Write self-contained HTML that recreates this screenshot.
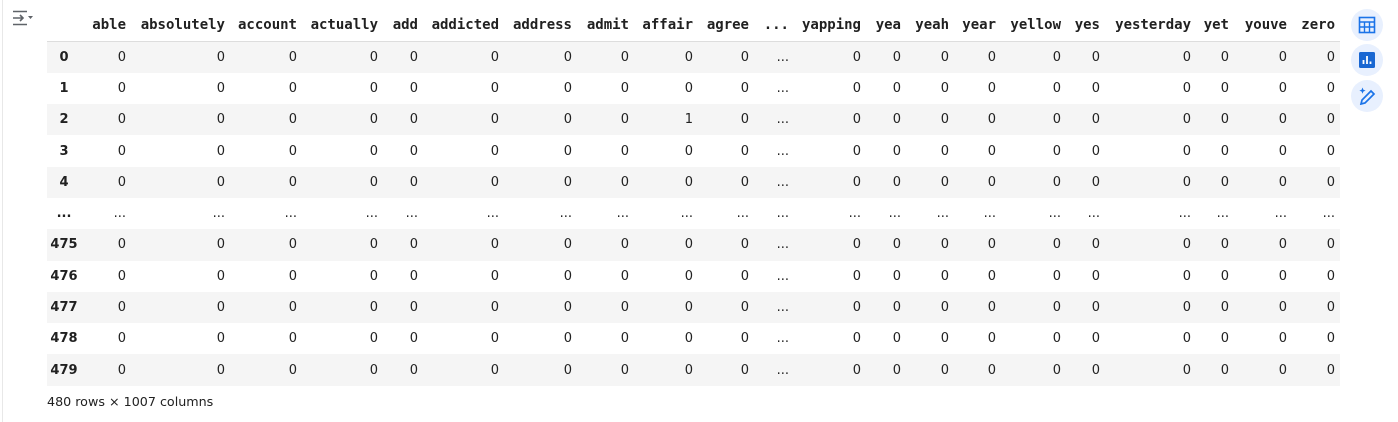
<!DOCTYPE html>
<html><head><meta charset="utf-8"><style>
body{margin:0;width:1398px;height:422px;background:#fff;position:relative;overflow:hidden;font-family:"DejaVu Sans","Liberation Sans",sans-serif;}
.lb{position:absolute;left:2px;top:0;width:1px;height:422px;background:#e8e8e8}
table{position:absolute;left:47px;top:9px;border-collapse:collapse;table-layout:fixed;font-size:13px;color:#212121}
th,td{padding:0 5px 0 0;text-align:right;white-space:nowrap;overflow:visible}
thead th{height:32px;font-family:"DejaVu Sans Mono","Liberation Mono",monospace;font-weight:bold;font-size:14px;border-bottom:1.5px solid #ddd;vertical-align:middle}
tbody tr{height:31.3px}
tbody tr:nth-child(odd){background:#f5f5f5}
tbody th{text-align:center;padding:0 4px 0 0;font-weight:bold}
.ft{position:absolute;left:47px;top:394px;font-size:12.7px;color:#212121}
.ic{position:absolute;left:1351px;width:32px;height:32px;border-radius:50%;background:#e8f0fe}
.ic svg{position:absolute;left:7px;top:7px}
</style></head><body>
<div class="lb"></div>
<svg style="position:absolute;left:12px;top:10px" width="22" height="16" viewBox="0 0 22 16"><g stroke="#5f6368" stroke-width="1.6" fill="none"><path d="M1 1.5h14M1 14.5h14M1 8h10M8 5l3 3-3 3"/></g><path d="M16 6h5l-2.5 3z" fill="#5f6368"/></svg>
<div class="ic" style="top:9px"><svg width="18" height="18" viewBox="0 0 18 18"><rect x="1.5" y="1.5" width="15" height="15" fill="none" stroke="#1a73e8" stroke-width="1.6"/><path d="M1.5 6h15M1.5 11h15M6.5 6v10.5M11.5 6v10.5" stroke="#1a73e8" stroke-width="1.4"/></svg></div>
<div class="ic" style="top:44px"><svg width="18" height="18" viewBox="0 0 18 18"><rect x="1" y="1" width="16" height="16" rx="1.5" fill="#1967d2"/><path d="M5.5 13V9M9 13V5M12.5 13v-2.5" stroke="#fff" stroke-width="1.8"/></svg></div>
<div class="ic" style="top:80px"><svg width="18" height="18" viewBox="0 0 18 18"><path d="M3 17l1-4L13 4l3 3-9 9z" fill="none" stroke="#1a73e8" stroke-width="1.7"/><path d="M4.5 0.5l.9 2.2 2.2.9-2.2.9-.9 2.2-.9-2.2-2.2-.9 2.2-.9z" fill="#1a73e8"/></svg></div>
<table>
<colgroup><col style="width:38px"><col style="width:46px"><col style="width:99px"><col style="width:72px"><col style="width:81px"><col style="width:40px"><col style="width:81px"><col style="width:73px"><col style="width:57px"><col style="width:64px"><col style="width:56px"><col style="width:40px"><col style="width:72px"><col style="width:40px"><col style="width:48px"><col style="width:47px"><col style="width:65px"><col style="width:39px"><col style="width:91px"><col style="width:38px"><col style="width:58px"><col style="width:48px"></colgroup>
<thead><tr><th></th><th>able</th><th>absolutely</th><th>account</th><th>actually</th><th>add</th><th>addicted</th><th>address</th><th>admit</th><th>affair</th><th>agree</th><th>...</th><th>yapping</th><th>yea</th><th>yeah</th><th>year</th><th>yellow</th><th>yes</th><th>yesterday</th><th>yet</th><th>youve</th><th>zero</th></tr></thead>
<tbody>
<tr><th>0</th><td>0</td><td>0</td><td>0</td><td>0</td><td>0</td><td>0</td><td>0</td><td>0</td><td>0</td><td>0</td><td>...</td><td>0</td><td>0</td><td>0</td><td>0</td><td>0</td><td>0</td><td>0</td><td>0</td><td>0</td><td>0</td></tr>
<tr><th>1</th><td>0</td><td>0</td><td>0</td><td>0</td><td>0</td><td>0</td><td>0</td><td>0</td><td>0</td><td>0</td><td>...</td><td>0</td><td>0</td><td>0</td><td>0</td><td>0</td><td>0</td><td>0</td><td>0</td><td>0</td><td>0</td></tr>
<tr><th>2</th><td>0</td><td>0</td><td>0</td><td>0</td><td>0</td><td>0</td><td>0</td><td>0</td><td>1</td><td>0</td><td>...</td><td>0</td><td>0</td><td>0</td><td>0</td><td>0</td><td>0</td><td>0</td><td>0</td><td>0</td><td>0</td></tr>
<tr><th>3</th><td>0</td><td>0</td><td>0</td><td>0</td><td>0</td><td>0</td><td>0</td><td>0</td><td>0</td><td>0</td><td>...</td><td>0</td><td>0</td><td>0</td><td>0</td><td>0</td><td>0</td><td>0</td><td>0</td><td>0</td><td>0</td></tr>
<tr><th>4</th><td>0</td><td>0</td><td>0</td><td>0</td><td>0</td><td>0</td><td>0</td><td>0</td><td>0</td><td>0</td><td>...</td><td>0</td><td>0</td><td>0</td><td>0</td><td>0</td><td>0</td><td>0</td><td>0</td><td>0</td><td>0</td></tr>
<tr><th>...</th><td>...</td><td>...</td><td>...</td><td>...</td><td>...</td><td>...</td><td>...</td><td>...</td><td>...</td><td>...</td><td>...</td><td>...</td><td>...</td><td>...</td><td>...</td><td>...</td><td>...</td><td>...</td><td>...</td><td>...</td><td>...</td></tr>
<tr><th>475</th><td>0</td><td>0</td><td>0</td><td>0</td><td>0</td><td>0</td><td>0</td><td>0</td><td>0</td><td>0</td><td>...</td><td>0</td><td>0</td><td>0</td><td>0</td><td>0</td><td>0</td><td>0</td><td>0</td><td>0</td><td>0</td></tr>
<tr><th>476</th><td>0</td><td>0</td><td>0</td><td>0</td><td>0</td><td>0</td><td>0</td><td>0</td><td>0</td><td>0</td><td>...</td><td>0</td><td>0</td><td>0</td><td>0</td><td>0</td><td>0</td><td>0</td><td>0</td><td>0</td><td>0</td></tr>
<tr><th>477</th><td>0</td><td>0</td><td>0</td><td>0</td><td>0</td><td>0</td><td>0</td><td>0</td><td>0</td><td>0</td><td>...</td><td>0</td><td>0</td><td>0</td><td>0</td><td>0</td><td>0</td><td>0</td><td>0</td><td>0</td><td>0</td></tr>
<tr><th>478</th><td>0</td><td>0</td><td>0</td><td>0</td><td>0</td><td>0</td><td>0</td><td>0</td><td>0</td><td>0</td><td>...</td><td>0</td><td>0</td><td>0</td><td>0</td><td>0</td><td>0</td><td>0</td><td>0</td><td>0</td><td>0</td></tr>
<tr><th>479</th><td>0</td><td>0</td><td>0</td><td>0</td><td>0</td><td>0</td><td>0</td><td>0</td><td>0</td><td>0</td><td>...</td><td>0</td><td>0</td><td>0</td><td>0</td><td>0</td><td>0</td><td>0</td><td>0</td><td>0</td><td>0</td></tr>
</tbody></table>
<div class="ft">480 rows × 1007 columns</div>
</body></html>
